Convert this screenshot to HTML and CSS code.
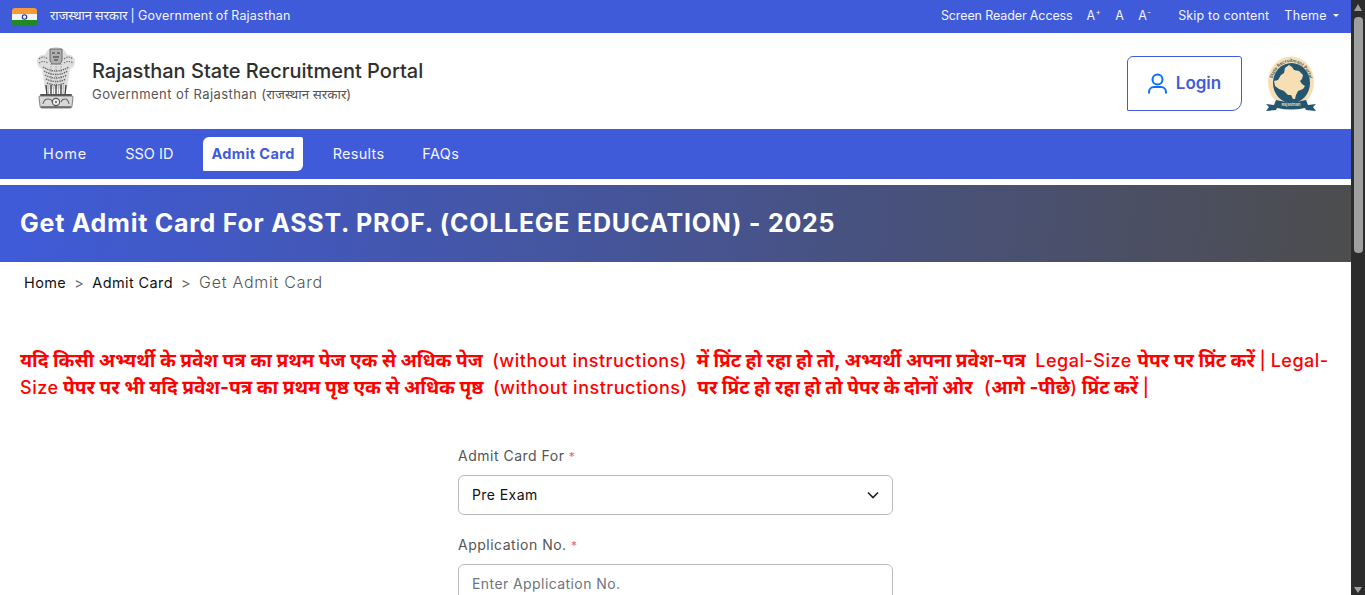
FILE: index.html
```html
<!DOCTYPE html>
<html lang="en">
<head>
<meta charset="utf-8">
<title>Get Admit Card</title>
<link rel="stylesheet" href="styles.css">
</head>
<body>
<div class="topbar">
  <div class="topbar-left">
    <svg class="flag" width="25" height="18" viewBox="0 0 25 18">
      <defs><clipPath id="fc"><rect width="25" height="18" rx="3"/></clipPath></defs>
      <g clip-path="url(#fc)">
        <rect width="25" height="6" fill="#f79a3a"/>
        <rect y="6" width="25" height="6" fill="#f4f4f4"/>
        <rect y="12" width="25" height="6" fill="#1f8a1f"/>
      </g>
      <circle cx="12.5" cy="9" r="2.2" fill="none" stroke="#1c2e8c" stroke-width="1.1"/>
    </svg>
    <span class="gov"><span class="hi">राजस्थान सरकार</span> | Government of Rajasthan</span>
  </div>
  <div class="topbar-right">
    <span class="sra">Screen Reader Access</span>
    <span class="sizes"><span>A<sup>+</sup></span><span>A</span><span>A<sup>-</sup></span></span>
    <span class="skip">Skip to content</span>
    <span class="theme">Theme<i class="caret"></i></span>
  </div>
</div>
<header class="brand">
  <div class="brand-left">
    <svg class="emblem" width="42" height="62" viewBox="0 0 42 62">
      <path d="M2 15c0-5 4-8 8-7 1-4 5-8 11-8s10 4 11 8c4-1 8 2 8 7 0 3-2 6-5 7l-3 20H10L7 22c-3-1-5-4-5-7z" fill="#dedede"/>
      <path d="M15 2h12v12l-2 3h-8l-2-3z" fill="#b0b0b0" stroke="#555" stroke-width=".8"/>
      <path d="M17 6h3M22 6h3M18 10h6M19 13h4" stroke="#333" stroke-width="1.2"/>
      <path d="M4 12q4-4 9 0M4 16q4-3 9 0M29 12q4-4 9 0M29 16q4-3 9 0" fill="none" stroke="#777" stroke-width="1.2" stroke-dasharray="1.5 1"/>
      <path d="M8 20q13 8 26 0M9 24q12 7 24 0M10 28q11 6 22 0M11 32q10 5 20 0M12 36q9 4 18 0" fill="none" stroke="#666" stroke-width="1.4" stroke-dasharray="1.4 .9"/>
      <path d="M16 17v20M21 17v20M26 17v20" stroke="#888" stroke-width="1" stroke-dasharray="1 1.4"/>
      <path d="M11 38l1 10M16 38v10M21 38v10M26 38v10M31 38l-1 10" stroke="#444" stroke-width="1.4"/>
      <path d="M13 38l.5 10M23.500 38v10M18.500 38v10M28.500 38l-.5 10" stroke="#bbb" stroke-width="1.200"/>
      <rect x="5" y="47" width="32" height="2" rx="1" fill="#555"/>
      <path d="M4 50q0-1 1-1h32q1 0 1 1l-1 9q0 2-2 2H7q-2 0-2-2z" fill="#d8d8d8" stroke="#666" stroke-width=".8"/>
      <circle cx="21" cy="55" r="3.600" fill="#eee" stroke="#555" stroke-width="1.100"/>
      <circle cx="21" cy="55" r="1" fill="#555"/>
      <path d="M8 57q1-5 5-5t4 3M26 55q1-3 4-3t4 5" fill="none" stroke="#666" stroke-width="1.100"/>
      <path d="M6 60h30" stroke="#444" stroke-width="1.200"/>
    </svg>
    <div class="brand-text">
      <div class="brand-title">Rajasthan State Recruitment Portal</div>
      <div class="brand-sub">Government of Rajasthan <span class="hi-sub">(राजस्थान सरकार)</span></div>
    </div>
  </div>
  <div class="brand-right">
    <a class="login">
      <svg width="19" height="21" viewBox="0 0 19 21" fill="none" stroke="#0d6efd" stroke-width="2">
        <circle cx="9.500" cy="6.500" r="5"/>
        <path d="M1 20.500v-1.500a5 5 0 0 1 5-5h7a5 5 0 0 1 5 5v1.500"/>
      </svg>
      <span>Login</span>
    </a>
    <svg class="seal" width="50" height="55" viewBox="0 0 50 55">
      <defs>
        <path id="arc" d="M5.500 30a19.500 24 0 0 1 39 0"/>
      </defs>
      <ellipse cx="25" cy="26" rx="23" ry="25.500" fill="#f6dfb4"/>
      <ellipse cx="25.500" cy="27" rx="18.500" ry="20" fill="#25556f"/>
      <path d="M23 9l3 2 2 3 5 1 4 4-1 4-2 2 2 3 3 2-2 3-5 2-2 4-1 4-2 0-2-4-3 0-4-4-5-2-4-3-1-5 4-1 3-5 3-2 1-5z" fill="#f6dfb4"/>
      <text class="seal-text"><textPath href="#arc" startOffset="50%" text-anchor="middle">State Recruitment Portal</textPath></text>
      <path d="M0 48l8 1 2-5q15 4 30 0l2 5 8-1-3 3 3 4-10-1-1-2q-14 3-28 0l-1 2-10 1 3-4z" fill="#25556f"/>
      <text class="seal-ribbon" x="25" y="49.500" text-anchor="middle">Rajasthan</text>
    </svg>
  </div>
</header>
<nav class="mainnav">
  <a>Home</a>
  <a>SSO ID</a>
  <a class="active">Admit Card</a>
  <a>Results</a>
  <a>FAQs</a>
</nav>
<section class="hero"><h1>Get Admit Card For ASST. PROF. (COLLEGE EDUCATION) - 2025</h1></section>
<div class="crumbs">
  <span>Home</span><b>&gt;</b><span>Admit Card</span><b>&gt;</b><span class="current">Get Admit Card</span>
</div>
<p class="notice">यदि किसी अभ्यर्थी के प्रवेश पत्र का प्रथम पेज एक से अधिक पेज <span class="lat word">(without instructions)</span> में प्रिंट हो रहा हो तो, अभ्यर्थी अपना प्रवेश-पत्र <span class="lat legal">Legal-Size</span> पेपर पर प्रिंट करें <span class="lat">|</span> <span class="lat">Legal-Size</span> पेपर पर भी यदि प्रवेश-पत्र का प्रथम पृष्ठ एक से अधिक पृष्ठ <span class="lat word">(without instructions)</span> पर प्रिंट हो रहा हो तो पेपर के दोनों ओर <span class="lat paren">(</span>आगे -पीछे<span class="lat">)</span> प्रिंट करें <span class="lat">|</span></p>
<form class="form">
  <div class="field">
    <label>Admit Card For <em>*</em></label>
    <div class="control select">Pre Exam
      <svg width="12" height="8" viewBox="0 0 12 8" fill="none" stroke="#222" stroke-width="1.600"><path d="M1 1.500l5 5 5-5"/></svg>
    </div>
  </div>
  <div class="field">
    <label>Application No. <em>*</em></label>
    <div class="control placeholder">Enter Application No.</div>
  </div>
</form>
<div class="scrollbar"><i class="arrow up"></i><i class="thumb"></i><i class="arrow down"></i></div>
</body>
</html>
```
FILE: styles.css
```css
* { box-sizing: border-box; }
body { margin: 0 14px 0 0; font-family: Inter, "Noto Sans", sans-serif; color: #222; background: #fff; }
.topbar { height: 33px; background: #3f5bd9; color: #f2f5ff; display: flex; justify-content: space-between; align-items: center; padding: 0 12px 2px 12px; font-size: 12.5px; letter-spacing: .35px; }
.topbar-left { display: flex; align-items: center; gap: 13px; }
.gov { letter-spacing: .22px; word-spacing: -.8px; padding-bottom: 2px; }
.hi { letter-spacing: 0; font-size: 13px; }
.flag { display: block; margin-top: 2px; }
.topbar-right { display: flex; align-items: center; gap: 13px; }
.sra { letter-spacing: -.12px; margin-right: 1px; }
.sizes { display: flex; gap: 14px; }
.sizes sup { font-size: 8px; line-height: 0; }
.skip { margin-left: 14px; letter-spacing: .15px; }
.theme { display: flex; align-items: center; gap: 6px; margin-left: 2px; }
.caret { width: 0; height: 0; border: 3px solid transparent; border-top-color: #fff; border-bottom: 0; }
.brand { height: 96px; display: flex; justify-content: space-between; align-items: center; padding: 0 35px; }
.brand-left { display: flex; align-items: center; gap: 15px; }
.emblem { margin-bottom: 7px; }
.brand-title { font-size: 20px; font-weight: 500; color: #2f2f2f; line-height: 26px; }
.brand-sub { font-size: 13px; color: #555; line-height: 20px; letter-spacing: .43px; }
.hi-sub { letter-spacing: 0; font-size: 13.3px; }
.brand-right { display: flex; align-items: center; gap: 24px; padding-top: 4px; }
.seal-text { font-size: 4.5px; fill: #25556f; font-weight: 600; }
.seal-ribbon { font-size: 4px; fill: #f6dfb4; font-weight: 600; }
.login { width: 115px; height: 55px; border: 1px solid #3f5bd9; border-radius: 6px 3px 10px 1px; display: flex; align-items: center; justify-content: center; gap: 9px; color: #3f5bd9; font-size: 17px; font-weight: 600; }
.mainnav { height: 50px; background: #3f5bd9; display: flex; align-items: center; gap: 22px; padding: 0 18px 0 35px; }
.mainnav a { height: 34px; padding: 0 8px 1px; display: flex; align-items: center; color: #f3f5ff; font-size: 14.5px; letter-spacing: .4px; }
.mainnav a:nth-child(1) { letter-spacing: .9px; }
.mainnav a:nth-child(2) { letter-spacing: 0; }
.mainnav a:nth-child(4) { letter-spacing: .25px; }
.mainnav a.active { background: #fff; color: #3f5bd9; font-weight: 700; border-radius: 6px 2px 6px 1px; }
.hero { margin-top: 6px; height: 77px; display: flex; align-items: center; padding: 0 20px 2px; background: linear-gradient(97deg, #3f5bd9 0%, #4d4d4d 100%); }
.hero h1 { margin: 0; color: #fff; font-size: 25px; font-weight: 700; letter-spacing: .75px; }
.crumbs { display: flex; align-items: center; height: 40px; padding-left: 24px; font-size: 14.5px; letter-spacing: .4px; color: #111; }
.crumbs b { font-weight: 400; color: #666; margin: 0 8px; }
.crumbs .current { color: #555; font-size: 16px; font-weight: 300; letter-spacing: .75px; }
.notice { margin: 45px 0 0; padding: 0 20px; color: #f00; font-size: 19.1px; line-height: 27px; font-weight: 700; height: 54px; }
.lat { font-size: 18px; font-weight: 500; letter-spacing: .5px; }
.word { margin: 0 5px; }
.legal { margin: 0 1px 0 5px; }
.paren { margin-left: 7px; }
.form { width: 435px; margin: 45px auto 0; }
.field { margin-bottom: 20px; }
.field label { display: block; font-size: 14px; color: #555; line-height: 20px; margin-bottom: 8px; letter-spacing: .5px; }
.field em { color: #e66; font-style: normal; font-size: 12px; }
.control { height: 40px; border: 1px solid #bbb; border-radius: 6px; padding: 0 13px 1px; display: flex; align-items: center; justify-content: space-between; font-size: 14px; color: #111; letter-spacing: .42px; }
.placeholder { color: #6c757d; }
.scrollbar { position: fixed; top: 0; right: 0; bottom: 0; width: 14px; background: #2c2c2c; }
.thumb { position: absolute; top: 17px; left: 3px; width: 9px; height: 236px; background: #9f9f9f; border-radius: 4px; }
.arrow { position: absolute; left: 3px; width: 0; height: 0; border-left: 4.5px solid transparent; border-right: 4.5px solid transparent; }
.arrow.up { top: 4px; border-bottom: 7px solid #9f9f9f; }
.arrow.down { bottom: 2px; border-top: 6px solid #9f9f9f; }
```
